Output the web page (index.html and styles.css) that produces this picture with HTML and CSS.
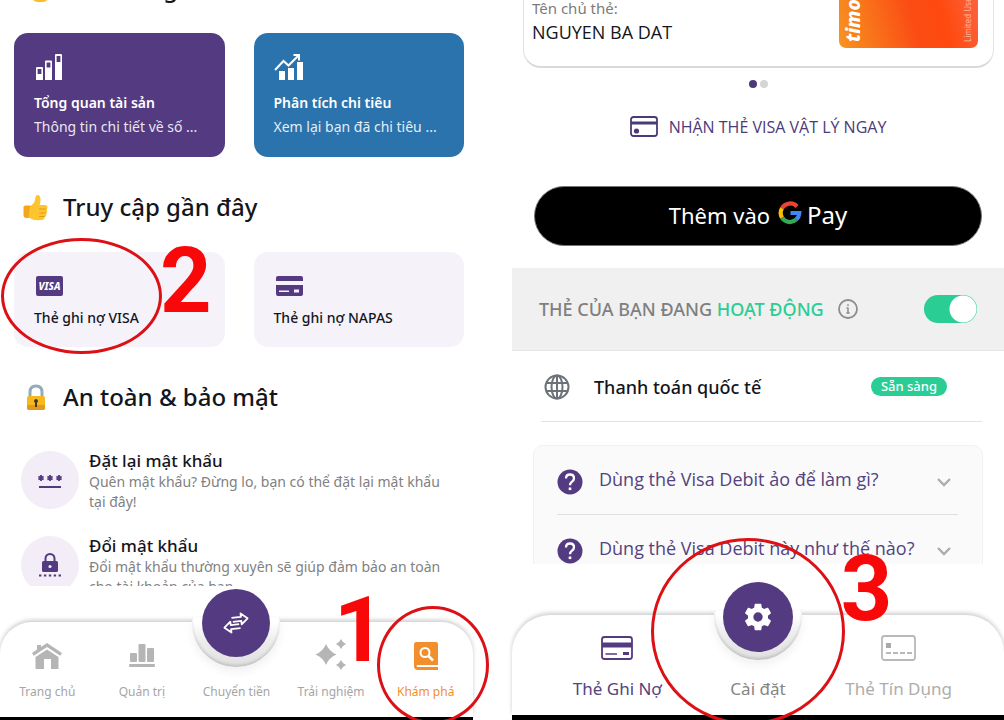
FILE: index.html
```html
<!DOCTYPE html>
<html lang="vi">
<head>
    <meta charset="UTF-8">
    <meta name="viewport" content="width=device-width, initial-scale=1">
    <title>Timo - Cài đặt thẻ</title>
    <link rel="stylesheet" href="styles.css">
</head>
<body>
    <!-- explore screen -->
    <section class="phone explore">
        <main class="scroll">
            <h2 class="heading first">
                <svg class="emoji" viewBox="0 0 28 28"><path d="M10 8q3-6 5-3v4h6q5 0 5 5v8q0 6-5 6h-5q-6 0-6-7z" fill="#fbbc2c"/></svg>
                Tính năng
            </h2>
            <div class="cards">
                <button class="card purple">
                    <svg width="30" height="28" viewBox="0 0 30 28">
                        <path fill="#fff" fill-rule="evenodd" d="M3 14h5a1 1 0 0 1 1 1v12H2V15a1 1 0 0 1 1-1zm.6 2v5h3.800v-5zM13 7.500h4a1 1 0 0 1 1 1V27h-7V8.500a1 1 0 0 1 1-1zm-.4 2v5h3.800v-5zM22 1h5a1 1 0 0 1 1 1v25h-7V2a1 1 0 0 1 1-1zm.6 2v6h3.800V3z"/>
                    </svg>
                    <span class="card-title">Tổng quan tài sản</span>
                    <span class="card-text">Thông tin chi tiết về số ...</span>
                </button>
                <button class="card blue">
                    <svg width="30" height="28" viewBox="0 0 30 28">
                        <path fill="#fff" d="M5 18h6v9H5zM14 15h6v12h-6zM23 9h6v18h-6z"/>
                        <path d="M1 17 9.500 8l5 4.500L24 3M19.500 2H25v5.500" fill="none" stroke="#fff" stroke-width="2"/>
                    </svg>
                    <span class="card-title">Phân tích chi tiêu</span>
                    <span class="card-text">Xem lại bạn đã chi tiêu ...</span>
                </button>
            </div>

            <h2 class="heading">
                <svg class="emoji" viewBox="0 0 28 28">
                    <path d="M1.500 14q0-1.500 2-1.500h5l1 12-5 .5q-3 0-3-3z" fill="#f4a51c"/>
                    <path d="M8 13q4-2 5-6 .5-5 2.500-5 3 0 3 5 0 3-1 5h5.500q2.500 0 2.500 2.500 0 1.500-1 2 1 1 .5 2.500-.3 1-1 1.500.7 1 .2 2.300-.4 1-1.500 1.200.2 2.500-3 3-6 .5-9-.5-3-.8-4-3z" fill="#fcc42e"/>
                    <path d="M17 16h7M17.500 20h6.500M17 23.500h5.500" stroke="#e8981b" fill="none"/>
                </svg>
                Truy cập gần đây
            </h2>
            <div class="cards">
                <button class="card light">
                    <svg width="30" height="24" viewBox="0 0 30 24">
                        <rect x="2" y="2" width="27" height="20" rx="2" fill="#543a80"/>
                        <text x="15.500" y="16" class="visa">VISA</text>
                    </svg>
                    <span class="card-name">Thẻ ghi nợ VISA</span>
                    <span class="ring ring-two"></span>
                    <span class="step step-two">2</span>
                </button>
                <button class="card light">
                    <svg width="30" height="24" viewBox="0 0 30 24">
                        <path fill="#543a80" fill-rule="evenodd" d="M4 2h23a2 2 0 0 1 2 2v3H2V4a2 2 0 0 1 2-2zM2 11h27v9a2 2 0 0 1-2 2H4a2 2 0 0 1-2-2zm3 5.500v1.500h10v-1.500zm15-1v3h5v-3z"/>
                    </svg>
                    <span class="card-name">Thẻ ghi nợ NAPAS</span>
                </button>
            </div>

            <h2 class="heading">
                <svg class="emoji" viewBox="0 0 28 28">
                    <path d="M8 15V9q0-6 6-6t6 6v6" fill="none" stroke="#91adba" stroke-width="3"/>
                    <rect x="5" y="13" width="18" height="14" rx="2" fill="#f6b81f"/>
                    <path d="M5 22h18v3q0 2-2 2H7q-2 0-2-2z" fill="#e49a18"/>
                    <path d="M14 16a2 2 0 0 1 1 3.700V24h-2v-4.300A2 2 0 0 1 14 16z" fill="#4b3320"/>
                </svg>
                An toàn &amp; bảo mật
            </h2>
            <ul class="list">
                <li class="item">
                    <span class="item-icon">
                        <svg width="30" height="30" viewBox="0 0 30 30" stroke="#543a80" fill="none">
                            <path d="M4 22h22" stroke-width="2"/>
                            <path stroke-width="1.800" d="M6 10v6M3.400 11.500l5.200 3M8.600 11.500l-5.200 3M15 10v6M12.400 11.500l5.200 3M17.600 11.500l-5.200 3M24 10v6M21.400 11.500l5.200 3M26.600 11.500l-5.200 3"/>
                        </svg>
                    </span>
                    <div>
                        <h3>Đặt lại mật khẩu</h3>
                        <p>Quên mật khẩu? Đừng lo, bạn có thể đặt lại mật khẩu tại đây!</p>
                    </div>
                </li>
                <li class="item">
                    <span class="item-icon">
                        <svg width="30" height="30" viewBox="0 0 30 30">
                            <path d="M10.500 13V8.500a4.500 4.500 0 0 1 9 0V13" fill="none" stroke="#543a80" stroke-width="2"/>
                            <rect x="7" y="11" width="16" height="11" rx="1.500" fill="#543a80"/>
                            <circle cx="15" cy="16.500" r="1.600" fill="#f2edf6"/>
                            <path d="M4 25.500h22" stroke="#543a80" stroke-width="2" stroke-dasharray="2.400 2.500"/>
                        </svg>
                    </span>
                    <div>
                        <h3>Đổi mật khẩu</h3>
                        <p>Đổi mật khẩu thường xuyên sẽ giúp đảm bảo an toàn cho tài khoản của bạn.</p>
                    </div>
                </li>
            </ul>
        </main>
        <nav class="tabbar">
            <div class="tabs">
                <button class="tab">
                    <svg width="32" height="30" viewBox="0 0 32 30" fill="#b5b5b5">
                        <path d="M1 12 6 8.500V4h4v2l6-4 15 10-1.800 2.800L16 6 2.800 14.800z"/>
                        <path d="M4.500 16 16 8.500 27.500 16v12H20V18h-7v10H4.500z"/>
                    </svg>
                    Trang chủ
                </button>
                <button class="tab">
                    <svg width="32" height="30" viewBox="0 0 32 30" fill="#b5b5b5">
                        <rect x="4" y="12" width="7" height="9" rx="1"/>
                        <rect x="12.500" y="3" width="7" height="18" rx="1"/>
                        <rect x="21" y="7" width="7" height="14" rx="1"/>
                        <rect x="3" y="23" width="26" height="3" rx="1"/>
                    </svg>
                    Quản trị
                </button>
                <button class="tab">
                    <span class="notch"></span>
                    <span class="fab">
                        <svg width="26" height="22" viewBox="0 0 26 22" fill="none" stroke="#fff" stroke-width="1.800" stroke-linejoin="round">
                            <g transform="rotate(-6 13 11)">
                                <path d="M9 5.500h9.500V2L25 7.500 18.500 13V9.500H10"/>
                                <path d="M17 16.500H7.500V20L1 14.500 7.500 9v3.500H16"/>
                            </g>
                        </svg>
                    </span>
                    Chuyển tiền
                </button>
                <button class="tab">
                    <svg width="32" height="34" viewBox="0 0 32 34" fill="#b5b5b5">
                        <path d="M11 7q3 7.500 10.500 10.500Q14 20.500 11 28 8 20.500.5 17.500 8 14.500 11 7zM26 2q1.500 3.500 5 5-3.500 1.500-5 5-1.500-3.500-5-5 3.500-1.500 5-5zM26 23q1.500 3.500 5 5-3.500 1.500-5 5-1.500-3.500-5-5 3.500-1.500 5-5z"/>
                    </svg>
                    Trải nghiệm
                    <span class="step step-one">1</span>
                </button>
                <button class="tab active">
                    <svg width="32" height="30" viewBox="0 0 32 30">
                        <path d="M6.500 1H26q2 0 2 2v21H8q-1.500 0-1.500 1t1.500 1h20v3H8q-4 0-4-4V3.500Q4 1 6.500 1z" fill="#f28f2d"/>
                        <circle cx="15" cy="11.500" r="4.500" fill="none" stroke="#fff" stroke-width="2"/>
                        <path d="m18.500 15 4.500 4.500" stroke="#fff" stroke-width="2.500"/>
                    </svg>
                    Khám phá
                    <span class="ring ring-one"></span>
                </button>
            </div>
        </nav>
    </section>

    <!-- card settings screen -->
    <section class="phone settings">
        <main class="scroll">
            <div class="account">
                <div class="owner">
                    <span>Tên chủ thẻ:</span>
                    <strong>NGUYEN BA DAT</strong>
                </div>
                <div class="debit">
                    <span class="debit-logo">timo</span>
                    <span class="debit-note">Limited Use</span>
                </div>
            </div>
            <div class="dots"><i class="on"></i><i></i></div>
            <button class="get-card">
                <svg width="28" height="22" viewBox="0 0 28 22">
                    <rect x="1" y="1" width="26" height="19" rx="2.500" fill="none" stroke="#4b3a78" stroke-width="1.800"/>
                    <path d="M1 7h26" stroke="#4b3a78" stroke-width="3"/>
                    <circle cx="6.500" cy="15" r="2.600" fill="#4b3a78"/>
                </svg>
                NHẬN THẺ VISA VẬT LÝ NGAY
            </button>
            <button class="gpay">
                <span>Thêm vào</span>
                <svg width="24" height="24" viewBox="0 0 24 24" fill="none" stroke-width="4.200">
                    <path d="M19 5.500A9.300 9.300 0 0 0 4 7.300" stroke="#ea4335"/>
                    <path d="M4 7.300a9.300 9.300 0 0 0 0 9.400" stroke="#fbbc04"/>
                    <path d="M4 16.700a9.300 9.300 0 0 0 14 2" stroke="#34a853"/>
                    <path d="M18 18.700a9.300 9.300 0 0 0 3.300-6.700H12.500" stroke="#4285f4"/>
                </svg>
                <span class="pay">Pay</span>
            </button>
            <div class="status">
                <label for="card-on">THẺ CỦA BẠN ĐANG <b>HOẠT ĐỘNG</b></label>
                <svg width="20" height="20" viewBox="0 0 20 20">
                    <circle cx="10" cy="10" r="9" fill="none" stroke="#8d8d8d" stroke-width="1.800"/>
                    <path d="M10 8.500V14M8.500 9H10M8.300 14h3.400M10 5.300v1.800" stroke="#8d8d8d" stroke-width="1.500"/>
                </svg>
                <input id="card-on" class="switch" type="checkbox" checked>
            </div>
            <div class="global">
                <svg width="26" height="26" viewBox="0 0 26 26" fill="none" stroke="#6c7278" stroke-width="2">
                    <circle cx="13" cy="13" r="11.500"/>
                    <ellipse cx="13" cy="13" rx="5.500" ry="11.500"/>
                    <path d="M2.500 9h21M2.500 17h21M13 1.500v23"/>
                </svg>
                <span>Thanh toán quốc tế</span>
                <em class="badge">Sẵn sàng</em>
            </div>
            <div class="faq">
                <button class="question">
                    <svg width="26" height="26" viewBox="0 0 26 26">
                        <circle cx="13" cy="13" r="12.500" fill="#543a80"/>
                        <path d="M9 9.500q0-4 4-4t4 3.700q0 2-2 3.500t-2 3.500" fill="none" stroke="#fff" stroke-width="2.300"/>
                        <rect x="11.700" y="18.500" width="2.600" height="2.600" fill="#fff"/>
                    </svg>
                    <span>Dùng thẻ Visa Debit ảo để làm gì?</span>
                    <svg width="16" height="10" viewBox="0 0 16 10"><path d="m2 2 6 6 6-6" fill="none" stroke="#acacac" stroke-width="2.400"/></svg>
                </button>
                <button class="question">
                    <svg width="26" height="26" viewBox="0 0 26 26">
                        <circle cx="13" cy="13" r="12.500" fill="#543a80"/>
                        <path d="M9 9.500q0-4 4-4t4 3.700q0 2-2 3.500t-2 3.500" fill="none" stroke="#fff" stroke-width="2.300"/>
                        <rect x="11.700" y="18.500" width="2.600" height="2.600" fill="#fff"/>
                    </svg>
                    <span>Dùng thẻ Visa Debit này như thế nào?</span>
                    <svg width="16" height="10" viewBox="0 0 16 10"><path d="m2 2 6 6 6-6" fill="none" stroke="#acacac" stroke-width="2.400"/></svg>
                </button>
            </div>
        </main>
        <nav class="tabbar">
            <div class="tabs">
                <button class="tab active">
                    <svg width="36" height="28" viewBox="0 0 36 28">
                        <rect x="3" y="3" width="30" height="22" rx="2.500" fill="none" stroke="#543a80" stroke-width="1.800"/>
                        <path d="M3 11h30" stroke="#543a80" stroke-width="5"/>
                        <path d="M6.500 20H18" stroke="#543a80" stroke-width="1.500"/>
                        <path d="M24 19.500h6" stroke="#543a80" stroke-width="3"/>
                    </svg>
                    Thẻ Ghi Nợ
                </button>
                <button class="tab">
                    <span class="notch"></span>
                    <span class="fab">
                        <svg width="32" height="32" viewBox="0 0 24 24" fill="#fff">
                            <path d="M19.430 12.980c.04-.32.07-.64.07-.98s-.03-.66-.07-.98l2.110-1.650c.19-.15.24-.42.12-.64l-2-3.460c-.12-.22-.39-.3-.61-.22l-2.490 1c-.52-.4-1.080-.73-1.690-.98l-.38-2.650A.49.490 0 0 0 14 2h-4c-.25 0-.46.180-.49.420l-.38 2.650c-.61.250-1.170.590-1.690.980l-2.490-1c-.23-.09-.49 0-.61.220l-2 3.460c-.13.220-.07.490.12.640l2.110 1.650c-.04.320-.07.650-.07.980s.03.660.07.980l-2.110 1.650c-.19.150-.24.420-.12.640l2 3.460c.12.220.39.300.61.220l2.490-1c.52.400 1.080.730 1.690.980l.38 2.650c.03.240.24.420.49.420h4c.25 0 .46-.18.490-.42l.38-2.650c.61-.25 1.170-.59 1.690-.98l2.490 1c.23.090.49 0 .61-.22l2-3.460c.12-.22.07-.49-.12-.64zM12 15.500a3.500 3.500 0 1 1 0-7 3.500 3.500 0 0 1 0 7z"/>
                        </svg>
                    </span>
                    Cài đặt
                    <span class="ring ring-three"></span>
                    <span class="step step-three">3</span>
                </button>
                <button class="tab pale">
                    <svg width="36" height="28" viewBox="0 0 36 28">
                        <rect x="1" y="2" width="33" height="24" rx="2.500" fill="none" stroke="#b9b9b9" stroke-width="1.800"/>
                        <rect x="5" y="9" width="5" height="5" fill="#a9a9a9"/>
                        <path d="M5 19h26" stroke="#b9b9b9" stroke-width="1.800" stroke-dasharray="5 2"/>
                    </svg>
                    Thẻ Tín Dụng
                </button>
            </div>
        </nav>
    </section>
</body>
</html>
```
FILE: styles.css
```css
* {
    box-sizing: border-box;
}
body {
    margin: 0;
    height: 100vh;
    overflow: hidden;
    display: grid;
    grid-template-columns: 473fr 492fr;
    grid-template-rows: 100%;
    gap: 39px;
    background: #fff;
    font-family: "Noto Sans", "Open Sans", sans-serif;
    color: #15151c;
}
button {
    margin: 0;
    padding: 0;
    border: none;
    background: none;
    font: inherit;
    color: inherit;
    cursor: pointer;
}
svg {
    display: block;
    flex: none;
}
.phone {
    min-width: 0;
    display: flex;
    flex-direction: column;
    border-bottom: 3px solid #000;
}
.scroll {
    flex: 1;
    min-height: 0;
    overflow: hidden;
}

/* explore */
.explore .scroll {
    padding: 0 9px 0 14px;
}
.heading {
    display: flex;
    align-items: center;
    gap: 13px;
    margin: 33px 0 28px 8px;
    font-size: 24px;
    font-weight: 500;
    line-height: 34px;
}
.heading.first {
    margin-top: -29px;
}
.emoji {
    width: 28px;
    height: 28px;
}
.cards {
    display: grid;
    grid-template-columns: 1fr 1fr;
    gap: 29px;
}
.card {
    position: relative;
    display: flex;
    flex-direction: column;
    align-items: flex-start;
    padding: 20px 20px 18px;
    border-radius: 14px;
    color: #fff;
    font-size: 14px;
    line-height: 24px;
    text-align: left;
    white-space: nowrap;
}
.purple {
    background: #543a80;
}
.blue {
    background: #2b73ad;
}
.light {
    padding: 22px 20px 17px;
    background: #f6f2fa;
    color: #15151c;
}
.card-title {
    margin-top: 10px;
    font-weight: 600;
}
.card-text {
    opacity: .88;
}
.card-name {
    margin-top: 8px;
    font-weight: 500;
}
.visa {
    fill: #fff;
    font-size: 10px;
    font-weight: 800;
    font-style: italic;
    text-anchor: middle;
}
.list {
    display: flex;
    flex-direction: column;
    gap: 22px;
    margin: 0;
    padding: 7px 6px 0 7px;
    list-style: none;
}
.item {
    display: flex;
    gap: 10px;
}
.item-icon {
    flex: none;
    display: grid;
    place-items: center;
    width: 58px;
    height: 58px;
    margin-top: 2px;
    border-radius: 50%;
    background: #f2edf6;
}
.item h3 {
    margin: 0;
    font-size: 17px;
    font-weight: 500;
    line-height: 23px;
}
.item p {
    margin: 0;
    font-size: 14px;
    line-height: 20px;
    color: #818181;
}

/* bottom bar */
.tabbar {
    position: relative;
    z-index: 1;
    padding-top: 36px;
    background: #fff;
}
.tabs {
    display: grid;
    grid-template-columns: repeat(5, 1fr);
    border-radius: 32px 32px 0 0;
    box-shadow: 0 -2px 4px rgba(0, 0, 0, .2);
}
.tab {
    position: relative;
    display: flex;
    flex-direction: column;
    align-items: center;
    justify-content: flex-end;
    height: 95px;
    padding-bottom: 16px;
    font-size: 12px;
    line-height: 18px;
    color: #a5a5a5;
    white-space: nowrap;
}
.tab > svg {
    margin-bottom: 12px;
}
.explore .active {
    color: #f28f2d;
}
.notch {
    position: absolute;
    top: -5px;
    left: 50%;
    width: 88px;
    height: 50px;
    margin-left: -44px;
    border-radius: 0 0 44px 44px;
    background: linear-gradient(#fff 10%, #ececec 50%, #e0e0e0);
    box-shadow: 0 5px 10px rgba(0, 0, 0, .06), inset 0 -2px 3px rgba(0, 0, 0, .14);
}
.fab {
    position: absolute;
    top: -33px;
    left: 50%;
    display: grid;
    place-items: center;
    width: 68px;
    height: 68px;
    margin-left: -34px;
    border-radius: 50%;
    background: #543a80;
}

/* card settings */
.settings {
    border-bottom-width: 5px;
}
.account {
    display: flex;
    align-items: flex-end;
    justify-content: space-between;
    margin: -63px 10px 0 11px;
    padding: 20px 15px 18px 8px;
    border: 1px solid #e4e4e4;
    border-bottom: 2px solid #d9d9d9;
    border-radius: 18px;
}
.owner {
    display: flex;
    flex-direction: column;
    padding-bottom: 4px;
    font-size: 15px;
    line-height: 24px;
    color: #7c7c7c;
}
.owner strong {
    font-family: "Open Sans", sans-serif;
    font-size: 18px;
    font-weight: 400;
    color: #15151c;
}
.debit {
    display: flex;
    justify-content: space-between;
    width: 139px;
    height: 90px;
    padding: 6px 4px;
    border-radius: 7px;
    background: linear-gradient(75deg, #f79420, #fb4c14 50%, #ff4a10 70%, #fb6a4c);
    color: #fff;
}
.debit-logo,
.debit-note {
    writing-mode: vertical-rl;
    transform: rotate(180deg);
}
.debit-logo {
    font-size: 19px;
    font-weight: 800;
    font-style: italic;
    line-height: 20px;
}
.debit-note {
    font-size: 8px;
    line-height: 12px;
    opacity: .55;
}
.dots {
    display: flex;
    justify-content: center;
    gap: 3px;
    margin-top: 12px;
}
.dots i {
    width: 8px;
    height: 8px;
    border-radius: 50%;
    background: #d5d5d5;
}
.dots .on {
    background: #4b3a78;
}
.get-card {
    display: flex;
    align-items: center;
    gap: 11px;
    margin: 27px auto 0;
    font-family: "Open Sans", sans-serif;
    font-size: 16px;
    font-weight: 500;
    line-height: 24px;
    color: #4b3a78;
}
.gpay {
    display: flex;
    align-items: center;
    justify-content: center;
    gap: 8px;
    width: calc(100% - 44px);
    height: 60px;
    margin: 47px 22px 22px;
    padding-bottom: 3px;
    border: 1px solid #777;
    border-radius: 30px;
    background: #000;
    color: #fff;
    font-size: 22px;
}
.gpay svg {
    margin-bottom: 3px;
}
.pay {
    margin-left: -3px;
    font-size: 24px;
}
.status {
    display: flex;
    align-items: center;
    gap: 14px;
    height: 83px;
    padding: 0 27px;
    background: #f0f0f0;
    border-bottom: 1px solid #e6e6e6;
    font-size: 18px;
    font-weight: 500;
    color: #7f7f7f;
}
.status b {
    font-weight: 500;
    color: #2acd94;
}
.switch {
    appearance: none;
    width: 53px;
    height: 28px;
    margin: 0 0 0 auto;
    border-radius: 14px;
    background: radial-gradient(circle at 39px 14px, #fff 13px, #2acd94 14px);
}
.global {
    display: flex;
    align-items: center;
    gap: 24px;
    height: 71px;
    margin: 0 22px 0 29px;
    padding: 1px 35px 0 3px;
    border-bottom: 1px solid #e2e2e2;
    font-size: 18px;
    font-weight: 500;
}
.badge {
    margin-left: auto;
    padding: 0 10px;
    border-radius: 10px;
    background: #2acd94;
    color: #fff;
    font-size: 13px;
    font-style: normal;
    line-height: 19px;
}
.faq {
    margin: 23px 21px 0;
    padding: 0 24px 0 23px;
    border: 1px solid #f1f1f1;
    border-radius: 10px;
    background: #fafafa;
}
.question {
    display: flex;
    align-items: center;
    width: 100%;
    height: 69px;
    padding: 4px 6px 0 0;
    border-bottom: 1px solid #e0e0e0;
    font-family: "Open Sans", sans-serif;
    font-size: 18px;
    color: #54437f;
}
.question span {
    margin: 0 auto 6px 16px;
}
.settings .tabbar {
    padding-top: 51px;
}
.settings .tabs {
    grid-template-columns: repeat(3, 1fr);
    padding: 0 35px;
    border-radius: 38px 38px 0 0;
}
.settings .tab {
    height: 100px;
    padding-bottom: 14px;
    font-size: 17px;
    line-height: 24px;
    color: #858585;
}
.settings .tab > svg {
    margin-bottom: 15px;
}
.settings .active {
    color: #54437f;
}
.settings .pale {
    color: #adadad;
}
.settings .fab {
    width: 70px;
    height: 70px;
    margin-left: -35px;
}

/* red guide marks */
.ring {
    position: absolute;
    border: 3px solid #dc1015;
    border-radius: 50%;
    pointer-events: none;
}
.step {
    position: absolute;
    z-index: 2;
    font: bold 90px/90px Roboto, sans-serif;
    color: #f80808;
    pointer-events: none;
}
.ring-one {
    top: -16px;
    left: -1px;
    width: 112px;
    height: 118px;
}
.step-one {
    top: -36px;
    left: 50px;
}
.ring-two {
    top: -14px;
    left: -13px;
    width: 161px;
    height: 116px;
}
.step-two {
    top: -15px;
    left: 146px;
}
.ring-three {
    top: -77px;
    left: -37px;
    width: 194px;
    height: 187px;
}
.step-three {
    top: -70px;
    left: 153px;
}
```
